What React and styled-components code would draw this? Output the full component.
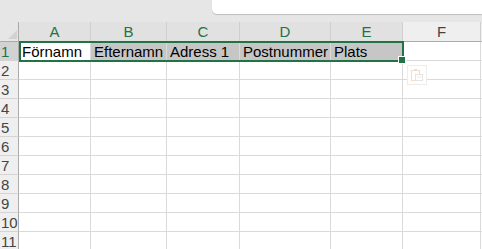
import React from "react";
import styled, { createGlobalStyle } from "styled-components";

const Global = createGlobalStyle`
  html, body { margin: 0; padding: 0; background: #ffffff; overflow: hidden; }
  body { font-family: "Liberation Sans", Arial, sans-serif; }
`;

const GREEN = "#217346";
const COLS = [72, 76, 73, 91, 72, 78];
const LETTERS = ["A", "B", "C", "D", "E", "F"];
const DATA = ["Förnamn", "Efternamn", "Adress 1", "Postnummer", "Plats"];

const Page = styled.div`
  width: 482px;
  height: 249px;
  display: flex;
  flex-direction: column;
  background: #fff;
  overflow: hidden;
`;

const TopBand = styled.div`
  height: 22px;
  flex: none;
  background: #e6e6e6;
  display: flex;
  justify-content: flex-end;
  align-items: flex-start;
`;

const FormulaBox = styled.div`
  width: 270px;
  height: 14px;
  background: #ffffff;
  border-bottom-left-radius: 5px;
  box-shadow: 0 1px 1px rgba(0, 0, 0, 0.18);
`;

const Sheet = styled.div`
  position: relative;
  display: grid;
  grid-template-columns: 19px ${COLS.map((c) => c + "px").join(" ")} 1fr;
  grid-template-rows: 20px;
  grid-auto-rows: 19px;
`;

const Corner = styled.div`
  position: relative;
  background: #e6e6e6;
  border-right: 1px solid #ababab;
  border-bottom: 1px solid #ababab;
  box-sizing: border-box;
  &::after {
    content: "";
    position: absolute;
    right: 1px;
    bottom: 2px;
    width: 0;
    height: 0;
    border-left: 9px solid transparent;
    border-bottom: 9px solid #d2d2d2;
  }
`;

const ColHead = styled.div`
  box-sizing: border-box;
  background: ${(p) => (p.$sel ? "#e1e1e1" : "#efefef")};
  border-right: 1px solid #cfcfcf;
  border-bottom: 1px solid ${(p) => (p.$sel ? GREEN : "#ababab")};
  color: ${(p) => (p.$sel ? GREEN : "#444444")};
  font-size: 15px;
  line-height: 19px;
  text-align: center;
`;

const RowHead = styled.div`
  box-sizing: border-box;
  background: ${(p) => (p.$sel ? "#d2d2d2" : "#efefef")};
  border-right: 1px solid #ababab;
  border-bottom: 1px solid #d4d4d4;
  color: ${(p) => (p.$sel ? GREEN : "#444444")};
  font-size: 15px;
  line-height: 19px;
  padding-left: 1px;
  white-space: nowrap;
  overflow: hidden;
`;

const Cell = styled.div`
  box-sizing: border-box;
  background: ${(p) => (p.$fill ? "#c6c6c6" : "#ffffff")};
  border-right: 1px solid #dadada;
  border-bottom: 1px solid #dadada;
  color: #000;
  font-size: 15px;
  line-height: 19px;
  padding-left: 3px;
  white-space: nowrap;
  overflow: hidden;
`;

const Selection = styled.div`
  position: absolute;
  left: 19px;
  top: 19px;
  width: 385px;
  height: 21px;
  box-sizing: border-box;
  border: 2px solid ${GREEN};
  pointer-events: none;
`;

const Handle = styled.div`
  position: absolute;
  right: -4px;
  bottom: -4px;
  width: 6px;
  height: 6px;
  background: ${GREEN};
  border: 1px solid #fff;
`;

const PasteHint = styled.div`
  position: absolute;
  left: 407px;
  top: 43px;
  width: 20px;
  height: 20px;
  box-sizing: border-box;
  background: #ffffff;
  border: 1px solid #ededed;
  display: flex;
  align-items: center;
  justify-content: center;
`;

export default function App() {
  const rows = Array.from({ length: 11 }, (_, i) => i + 1);
  return (
    <Page>
      <Global />
      <TopBand>
        <FormulaBox />
      </TopBand>
      <Sheet>
        <Corner />
        {LETTERS.map((l, i) => (
          <ColHead key={l} $sel={i < 5}>
            {l}
          </ColHead>
        ))}
        <ColHead $sel={false} />
        {rows.map((r) => (
          <React.Fragment key={r}>
            <RowHead $sel={r === 1}>{r}</RowHead>
            {COLS.map((_, ci) => (
              <Cell key={ci} $fill={r === 1 && ci > 0 && ci < 5}>
                {r === 1 ? DATA[ci] || "" : ""}
              </Cell>
            ))}
            <Cell />
          </React.Fragment>
        ))}
        <Selection>
          <Handle />
        </Selection>
        <PasteHint>
          <svg width="14" height="14" viewBox="0 0 14 14">
            <rect x="1.5" y="2.5" width="8" height="10" fill="none" stroke="#f3dccb" strokeWidth="1" />
            <rect x="4" y="1" width="3" height="2" fill="#f3dccb" />
            <rect x="5.5" y="6.5" width="7" height="6" fill="#fff" stroke="#e4e4e4" strokeWidth="1" />
            <line x1="7" y1="9" x2="11" y2="9" stroke="#e8e8e8" strokeWidth="1" />
          </svg>
        </PasteHint>
      </Sheet>
    </Page>
  );
}
